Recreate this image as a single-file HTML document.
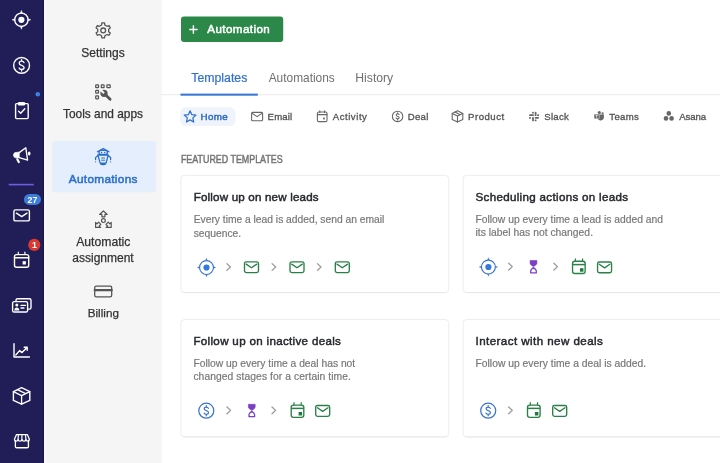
<!DOCTYPE html>
<html><head><meta charset="utf-8">
<style>
*{box-sizing:border-box;margin:0;padding:0}
html,body{width:720px;height:463px;overflow:hidden;background:#fff;font-family:"Liberation Sans",sans-serif}
svg{position:absolute;left:0;top:0;will-change:transform}
text{font-family:"Liberation Sans",sans-serif}
</style></head><body>
<svg width="720" height="463" viewBox="0 0 720 463">
<!-- backgrounds -->
<rect x="0" y="0" width="720" height="463" fill="#fff"/>
<rect x="0" y="0" width="44" height="463" fill="#211d57"/>
<rect x="43" y="0" width="1" height="463" fill="#1b1749"/>
<rect x="44" y="0" width="3" height="463" fill="#f7f8fd"/>
<rect x="47" y="0" width="114.8" height="463" fill="#f5f5f5"/>

<!-- NAV ICONS -->
<g fill="none" stroke="#fff" stroke-width="1.5" stroke-linecap="round" stroke-linejoin="round">
  <!-- crosshair -->
  <circle cx="21.4" cy="19.8" r="6.7" stroke-width="1.35"/>
  <path d="M20.5 13L21.4 10.4L22.3 13ZM20.5 26.6L21.4 29.2L22.3 26.6ZM14.6 18.9L12 19.8L14.6 20.7ZM28.2 18.9L30.8 19.8L28.2 20.7Z" fill="#fff" stroke-width=".5"/>
  <circle cx="21.4" cy="19.8" r="3.1" fill="#fff" stroke="none"/>
  <!-- dollar -->
  <circle cx="21.6" cy="65.4" r="7.9" stroke-width="1.4"/>
  <path d="M24 62.6C23.6 61.7 22.7 61.2 21.6 61.2C20.2 61.2 19.2 62 19.2 63.2C19.2 64.4 20.2 64.9 21.6 65.3C23 65.7 24.1 66.2 24.1 67.5C24.1 68.7 23 69.5 21.6 69.5C20.4 69.5 19.5 69 19.1 68M21.6 59.6V61.2M21.6 69.5V71.1" stroke-width="1.3"/>
  <!-- clipboard -->
  <rect x="15.6" y="103.6" width="12.6" height="15" rx="1" stroke-width="1.4"/>
  <path d="M18.8 102.6H24.6V105H18.8Z" fill="#fff" stroke-width="1"/>
  <path d="M18.6 111.2L20.7 113.3L24.8 108.8" stroke-width="1.4"/>
  <!-- megaphone -->
  <path d="M19.2 152.5V157.7H15.6C14.4 157.7 13.6 156.6 13.6 155.1C13.6 153.6 14.4 152.5 15.6 152.5Z" fill="#fff" stroke-width="0.8"/>
  <path d="M19.2 152.6L25.8 147.8L27.6 160.2L19.2 157.6" stroke-width="1.35"/>
  <ellipse cx="29.2" cy="153.6" rx="1.3" ry="2.1" fill="#fff" stroke="none"/>
  <path d="M17.3 159.2L18.8 162" stroke-width="2.2"/>
  <!-- divider -->
  <rect x="8.7" y="183.8" width="25.1" height="1.6" fill="#6e5ee0" stroke="none"/>
  <!-- mail -->
  <rect x="13.9" y="209.9" width="15.5" height="11" rx="1.5" stroke-width="1.4"/>
  <path d="M16.4 213.2L21.7 216.6L27 213.2" stroke-width="1.4"/>
  <!-- calendar -->
  <rect x="14.5" y="254.6" width="14.2" height="12.6" rx="2" stroke-width="1.4"/>
  <path d="M14.5 257.8H28.7" stroke-width="1.5"/>
  <path d="M18.3 252.2V254.4M24.9 252.2V254.4" stroke-width="1.2"/>
  <rect x="22.6" y="261.2" width="3.3" height="3.3" fill="#fff" stroke="none"/>
  <!-- contacts -->
  <path d="M16 300.8V300.3C16 299.4 16.7 298.7 17.6 298.7H29.4C30.3 298.7 31 299.4 31 300.3V307.5C31 308.4 30.3 309.1 29.4 309.1H28.4" stroke-width="1.4"/>
  <rect x="12.6" y="301.6" width="15" height="10.4" rx="1.6" stroke-width="1.4"/>
  <circle cx="16.8" cy="305" r="1.5" fill="#fff" stroke="none"/>
  <path d="M14.2 310.6C14.4 308.6 15.4 307.6 16.8 307.6S19.2 308.6 19.4 310.6Z" fill="#fff" stroke="none"/>
  <path d="M21 305.4H25.4M21 308H24" stroke-width="1.3"/>
  <!-- chart -->
  <path d="M14 343.8V357H29.4" stroke-width="1.4"/>
  <path d="M15.8 355L19.6 350.6L22 352.6L27 347.4M24.2 347.2H27.2V350.2" stroke-width="1.4"/>
  <!-- box -->
  <path d="M21.6 387.6L29.8 391.6V400.4L21.6 404.2L13.4 400.4V391.6Z" stroke-width="1.4"/>
  <path d="M13.4 391.6L21.6 395.6L29.8 391.6M21.6 395.6V404.2M17.4 389.6L25.7 393.6" stroke-width="1.3"/>
  <!-- shop -->
  <g transform="translate(21.9 441) scale(0.96) translate(-22.2 -441)">
  <path d="M15.4 440.4V446.6C15.4 447.4 16 448 16.8 448H27.6C28.4 448 29 447.4 29 446.6V440.4" stroke-width="1.4"/>
  <path d="M16.6 434.3H27.8L30 439.2C30 440.6 29.2 441.2 28.2 441.2C27.2 441.2 26.4 440.6 26.4 439.3C26.4 440.6 25.6 441.2 24.4 441.2C23.2 441.2 22.3 440.6 22.3 439.3C22.3 440.6 21.3 441.2 20.1 441.2C19 441.2 18.2 440.6 18.2 439.3C18.2 440.6 17.2 441.2 16.2 441.2C15.2 441.2 14.4 440.6 14.4 439.2Z" stroke-width="1.3"/>
  <path d="M18.5 434.3L18.2 439.3M22.2 434.3V439.3M25.9 434.3L26.4 439.3" stroke-width="1.2"/>
  </g>
</g>
<!-- nav badges -->
<circle cx="37.8" cy="94.2" r="2.3" fill="#3b82e6"/>
<rect x="23.9" y="193.9" width="17.1" height="11.1" rx="5.55" fill="#3b7ddd"/>
<text x="32.5" y="202.6" font-size="8.8" font-weight="700" fill="#fff" text-anchor="middle">27</text>
<circle cx="34.3" cy="244.9" r="6.1" fill="#d9392f"/>
<text x="34.4" y="248.1" font-size="8.8" font-weight="700" fill="#fff" text-anchor="middle">1</text>

<!-- PANEL -->
<g fill="#333" stroke="#333" stroke-width="0.25">
<text x="103" y="57" font-size="12" text-anchor="middle">Settings</text>
<text x="103" y="118.3" font-size="11.9" text-anchor="middle">Tools and apps</text>
<text x="103.3" y="245.5" font-size="12.2" text-anchor="middle">Automatic</text>
<text x="103" y="262" font-size="12" text-anchor="middle">assignment</text>
<text x="103.3" y="317.3" font-size="11.7" text-anchor="middle">Billing</text>
</g>
<rect x="52.1" y="141.1" width="104.1" height="51.1" rx="3" fill="#e4eefc"/>
<text x="68.8" y="182.9" font-size="11.8" fill="#2a6fcb" stroke="#2a6fcb" stroke-width="0.5" textLength="68.6" lengthAdjust="spacing">Automations</text>
<g fill="none" stroke="#555" stroke-width="1.3" stroke-linecap="round" stroke-linejoin="round">
  <!-- gear -->
  <path d="M101.56 25.04L101.88 22.92H104.52L104.84 25.04L107.02 26.30L109.02 25.51L110.34 27.80L108.66 29.14V31.66L110.34 33.00L109.02 35.29L107.02 34.50L104.84 35.76L104.52 37.88H101.88L101.56 35.76L99.38 34.50L97.38 35.29L96.06 33.00L97.74 31.66V29.14L96.06 27.80L97.38 25.51L99.38 26.30Z"/>
  <circle cx="103.2" cy="30.4" r="2.4"/>
  <!-- billing -->
  <rect x="94.7" y="286.2" width="17" height="10.6" rx="1.6"/>
  <path d="M94.7 290.2H111.7" stroke-width="2.2"/>
</g>
<!-- tools -->
<g fill="none" stroke="#555" stroke-width="1.25">
  <rect x="95.7" y="84.9" width="2.8" height="2.8" rx=".5"/>
  <rect x="101.3" y="84.9" width="2.8" height="2.8" rx=".5"/>
  <rect x="106.9" y="84.9" width="3.3" height="2.8" rx=".5"/>
  <rect x="95.7" y="90.4" width="2.8" height="2.8" rx=".5"/>
  <rect x="95.7" y="95.9" width="2.8" height="2.9" rx=".5"/>
</g>
<circle cx="104" cy="93.3" r="3.6" fill="#555"/>
<path d="M104.2 93.5L110.1 99.3" stroke="#555" stroke-width="2.8" stroke-linecap="round"/>
<path d="M104 93.3L100.8 90.1" stroke="#f5f5f5" stroke-width="2.1" stroke-linecap="butt"/>
<!-- robot -->
<g fill="none" stroke="#2a6fcb" stroke-width="1.3" stroke-linecap="round" stroke-linejoin="round">
  <path d="M97.4 151.8L103.2 148.6L109 151.8"/>
  <rect x="99" y="150.3" width="8.4" height="4.2" rx="2.1"/>
  <path d="M97.9 155H108.2L106.2 162.6C105.9 163.8 104.8 164.7 103.6 164.7H102.6C101.4 164.7 100.3 163.8 100 162.6Z"/>
  <path d="M97.9 155.4L95.6 157.6V159.6M108.2 155.4L110.6 157.6V159.6"/>
  <path d="M101.6 158H104.6M101.6 160.2H104.6" stroke-width="1"/>
</g>
<circle cx="101.6" cy="152.4" r=".75" fill="#2a6fcb"/><circle cx="104.7" cy="152.4" r=".75" fill="#2a6fcb"/>
<circle cx="95.6" cy="161.8" r=".6" fill="#2a6fcb"/><circle cx="110.6" cy="161.8" r=".6" fill="#2a6fcb"/>
<path d="M100.6 162.6H105.6L105.4 163.4C105 164.4 104.2 164.9 103.1 164.9S101.2 164.4 100.8 163.4Z" fill="#2a6fcb"/>
<!-- assignment -->
<g fill="none" stroke="#555" stroke-width="1.2" stroke-linejoin="round">
  <path d="M103.4 211L107.2 214.4H104.9V216.8H101.9V214.4H99.6Z"/>
  <circle cx="103.4" cy="220.6" r="1.9"/>
  <path d="M95.6 222.4V227.4H100.6L99.2 226L100.8 224.4L98.6 222.2L97 223.8Z"/>
  <path d="M111.2 222.4V227.4H106.2L107.6 226L106 224.4L108.2 222.2L109.8 223.8Z"/>
</g>

<!-- MAIN -->
<rect x="181" y="16.4" width="102.2" height="25.6" rx="3" fill="#2b8849"/>
<path d="M189.2 29.5H197.6M193.4 25.3V33.7" stroke="#fff" stroke-width="1.4"/>
<text x="207.3" y="32.9" font-size="11.6" fill="#fff" stroke="#fff" stroke-width="0.5" textLength="62.4" lengthAdjust="spacing">Automation</text>

<!-- tabs -->
<rect x="161" y="94.2" width="559" height="1" fill="#ebebeb"/>
<rect x="180.5" y="93.6" width="77.3" height="2.1" fill="#3a78d4"/>
<text x="191.3" y="81.7" font-size="12.3" fill="#2f6fcf" stroke="#2f6fcf" stroke-width="0.2">Templates</text>
<text x="268.7" y="81.7" font-size="11.9" fill="#707070">Automations</text>
<text x="355.3" y="81.7" font-size="12.2" fill="#707070">History</text>

<!-- chips -->
<rect x="180.2" y="107.2" width="55.3" height="18.8" rx="5.5" fill="#eff4fc"/>
<path d="M190.10 110.80 L191.80 114.65 L196.00 115.08 L192.86 117.90 L193.74 122.02 L190.10 119.90 L186.46 122.02 L187.34 117.90 L184.20 115.08 L188.40 114.65Z" fill="none" stroke="#2f6fcf" stroke-width="1.25" stroke-linejoin="round"/>
<text x="200.6" y="119.9" font-size="9.8" fill="#2c69c4" stroke="#2c69c4" stroke-width="0.45" textLength="27.2" lengthAdjust="spacing">Home</text>
<g font-size="9.6" fill="#555" stroke="#555" stroke-width="0.32" lengthAdjust="spacing">
<text x="267.6" y="120" textLength="24.6" lengthAdjust="spacing">Email</text>
<text x="332.7" y="120" textLength="34.2" lengthAdjust="spacing">Activity</text>
<text x="407.7" y="120" textLength="20.6" lengthAdjust="spacing">Deal</text>
<text x="468.1" y="120" textLength="36" lengthAdjust="spacing">Product</text>
<text x="544.3" y="120" textLength="24.5" lengthAdjust="spacing">Slack</text>
<text x="609.3" y="120" textLength="29.5" lengthAdjust="spacing">Teams</text>
<text x="679.3" y="120" textLength="26.8" lengthAdjust="spacing">Asana</text>
</g>
<g fill="none" stroke="#666" stroke-width="1.1" stroke-linecap="round" stroke-linejoin="round">
  <rect x="251.6" y="112.4" width="11" height="8.4" rx="1"/>
  <path d="M252.2 113.4L257.1 116.6L262 113.4"/>
  <rect x="317.4" y="112" width="9.6" height="9.6" rx="1.4"/>
  <path d="M317.4 114.6H327M319.8 110.8V112.6M324.6 110.8V112.6"/>
  <rect x="323" y="117.6" width="1.8" height="1.8" fill="#666" stroke="none"/>
  <circle cx="397.6" cy="116.4" r="5.2"/>
  <path d="M399.1 114.6C398.9 114.1 398.3 113.7 397.6 113.7C396.8 113.7 396.2 114.2 396.2 114.9C396.2 115.7 396.9 116 397.6 116.2C398.4 116.4 399.1 116.8 399.1 117.6C399.1 118.3 398.4 118.9 397.6 118.9C396.9 118.9 396.2 118.5 396 117.9M397.6 112.7V113.7M397.6 118.9V120"/>
  <path d="M457.5 110.8L462.8 113.4V119.4L457.5 122L452.2 119.4V113.4Z"/>
  <path d="M452.2 113.4L457.5 116L462.8 113.4M457.5 116V122M454.9 112.1L460.2 114.7"/>
</g>
<!-- slack -->
<g fill="#666">
  <rect x="529.1" y="114.3" width="4.8" height="1.8" rx=".9"/>
  <rect x="532.1" y="111.8" width="1.8" height="1.8" rx=".5"/>
  <rect x="534.7" y="111.8" width="1.8" height="4.3" rx=".9"/>
  <rect x="537.2" y="114.3" width="1.8" height="1.8" rx=".5"/>
  <rect x="534.7" y="116.9" width="4.3" height="1.8" rx=".9"/>
  <rect x="534.7" y="119.5" width="1.8" height="1.8" rx=".5"/>
  <rect x="532.1" y="116.9" width="1.8" height="4.4" rx=".9"/>
  <rect x="529.1" y="116.9" width="1.8" height="1.8" rx=".5"/>
</g>
<!-- teams -->
<g fill="#666">
  <circle cx="599.3" cy="112.6" r="1.6"/>
  <circle cx="602.6" cy="113.4" r="1.1"/>
  <path d="M597.4 114.4H603.9V117.6C603.9 119.2 602.6 120.4 601 120.4H600.2C598.6 120.4 597.4 119.2 597.4 117.6Z"/>
  <rect x="594" y="113.9" width="5.2" height="4.9" rx=".6" fill="#666" stroke="#fff" stroke-width=".5"/>
  <path d="M595.2 115.1H598M596.6 115.1V117.8" stroke="#fff" stroke-width=".7"/>
</g>
<g fill="#666">
  <circle cx="668.8" cy="113.4" r="2.3"/>
  <circle cx="666" cy="118.4" r="2.3"/>
  <circle cx="671.6" cy="118.4" r="2.3"/>
</g>

<text x="180.9" y="162.5" font-size="10.4" fill="#747474" stroke="#747474" stroke-width="0.45" textLength="101.8" lengthAdjust="spacingAndGlyphs">FEATURED TEMPLATES</text>

<!-- cards -->
<g fill="#fff" stroke="#ededed" stroke-width="1">
  <rect x="180.9" y="175.3" width="267.8" height="117.3" rx="3.5"/>
  <rect x="463.1" y="175.3" width="280" height="117.3" rx="3.5"/>
  <rect x="180.9" y="319.6" width="267.8" height="117.3" rx="3.5"/>
  <rect x="463.1" y="319.6" width="280" height="117.3" rx="3.5"/>
</g>
<g fill="#e6e6e6">
  <rect x="183.5" y="292.2" width="262.6" height="0.9"/>
  <rect x="465.7" y="292.2" width="260" height="0.9"/>
  <rect x="183.5" y="436.5" width="262.6" height="0.9"/>
  <rect x="465.7" y="436.5" width="260" height="0.9"/>
</g>
<g font-size="11.6" fill="#26282e" stroke="#26282e" stroke-width="0.46" letter-spacing="0.18">
<text x="193.7" y="201.3">Follow up on new leads</text>
<text x="475.5" y="201.2" textLength="152.8" lengthAdjust="spacing">Scheduling actions on leads</text>
<text x="193.4" y="345.1" textLength="147.7" lengthAdjust="spacing">Follow up on inactive deals</text>
<text x="475.5" y="344.5" textLength="127.5" lengthAdjust="spacing">Interact with new deals</text>
</g>
<g font-size="10.3" fill="#777" stroke="#777" stroke-width="0.18">
<text x="193.7" y="222.8" textLength="190.6" lengthAdjust="spacing">Every time a lead is added, send an email</text>
<text x="193.7" y="236.5">sequence.</text>
<text x="475.5" y="222.7" textLength="187.5" lengthAdjust="spacing">Follow up every time a lead is added and</text>
<text x="475.5" y="235.8" textLength="117.5" lengthAdjust="spacing">its label has not changed.</text>
<text x="193.4" y="367" textLength="161.8" lengthAdjust="spacing">Follow up every time a deal has not</text>
<text x="193.4" y="380.4" textLength="157.5" lengthAdjust="spacing">changed stages for a certain time.</text>
<text x="475.5" y="366.7" textLength="170.7" lengthAdjust="spacing">Follow up every time a deal is added.</text>
</g>


<!-- card 1 icons -->
<g transform="translate(206.5 267.5)">
    <circle cx="0" cy="0" r="6.95" fill="none" stroke="#3a73d0" stroke-width="1.15"/>
    <circle cx="0" cy="0" r="3.1" fill="#3479e0"/>
    <path d="M-.8 -7.2L0 -9.2L.8 -7.2ZM-.8 7.2L0 9.2L.8 7.2ZM-7.2 -.8L-9.2 0L-7.2 .8ZM7.2 -.8L9.2 0L7.2 .8Z" fill="#3a73d0" stroke="#3a73d0" stroke-width=".35" stroke-linejoin="round"/>
</g>
<g transform="translate(228.6 267)">
    <path d="M-1.8 -3.4L1.8 0L-1.8 3.4" fill="none" stroke="#9a9a9a" stroke-width="1.3" stroke-linecap="round" stroke-linejoin="round"/>
</g>
<g transform="translate(251.5 267.2)">
    <rect x="-7" y="-5.4" width="14" height="10.8" rx="1.8" fill="none" stroke="#2a8048" stroke-width="1.35"/>
    <path d="M-5.3 -3.1L0 0.5L5.3 -3.1" fill="none" stroke="#2a8048" stroke-width="1.35" stroke-linejoin="round" stroke-linecap="round"/>
</g>
<g transform="translate(273.9 267)">
    <path d="M-1.8 -3.4L1.8 0L-1.8 3.4" fill="none" stroke="#9a9a9a" stroke-width="1.3" stroke-linecap="round" stroke-linejoin="round"/>
</g>
<g transform="translate(297 267.2)">
    <rect x="-7" y="-5.4" width="14" height="10.8" rx="1.8" fill="none" stroke="#2a8048" stroke-width="1.35"/>
    <path d="M-5.3 -3.1L0 0.5L5.3 -3.1" fill="none" stroke="#2a8048" stroke-width="1.35" stroke-linejoin="round" stroke-linecap="round"/>
</g>
<g transform="translate(319.2 267)">
    <path d="M-1.8 -3.4L1.8 0L-1.8 3.4" fill="none" stroke="#9a9a9a" stroke-width="1.3" stroke-linecap="round" stroke-linejoin="round"/>
</g>
<g transform="translate(342.3 267.2)">
    <rect x="-7" y="-5.4" width="14" height="10.8" rx="1.8" fill="none" stroke="#2a8048" stroke-width="1.35"/>
    <path d="M-5.3 -3.1L0 0.5L5.3 -3.1" fill="none" stroke="#2a8048" stroke-width="1.35" stroke-linejoin="round" stroke-linecap="round"/>
</g>
<!-- card 2 -->
<g transform="translate(488.4 267)">
    <circle cx="0" cy="0" r="6.95" fill="none" stroke="#3a73d0" stroke-width="1.15"/>
    <circle cx="0" cy="0" r="3.1" fill="#3479e0"/>
    <path d="M-.8 -7.2L0 -9.2L.8 -7.2ZM-.8 7.2L0 9.2L.8 7.2ZM-7.2 -.8L-9.2 0L-7.2 .8ZM7.2 -.8L9.2 0L7.2 .8Z" fill="#3a73d0" stroke="#3a73d0" stroke-width=".35" stroke-linejoin="round"/>
</g>
<g transform="translate(510.5 266.6)">
    <path d="M-1.8 -3.4L1.8 0L-1.8 3.4" fill="none" stroke="#9a9a9a" stroke-width="1.3" stroke-linecap="round" stroke-linejoin="round"/>
</g>
<g transform="translate(533.5 266.8)">
    <path d="M-3.4 -6.3H3.4V-3.6C3.4 -2.2 1.2 -0.9 0 -0.2C-1.2 -0.9 -3.4 -2.2 -3.4 -3.6Z" fill="#7b3fc4" stroke="#7b3fc4" stroke-width=".6" stroke-linejoin="round"/>
    <path d="M0 0.8C1.4 1.6 2.8 2.8 2.8 4.2V6.1H-2.8V4.2C-2.8 2.8 -1.4 1.6 0 0.8Z" fill="none" stroke="#7b3fc4" stroke-width="1.3" stroke-linejoin="round"/>
</g>
<g transform="translate(555.7 266.6)">
    <path d="M-1.8 -3.4L1.8 0L-1.8 3.4" fill="none" stroke="#9a9a9a" stroke-width="1.3" stroke-linecap="round" stroke-linejoin="round"/>
</g>
<g transform="translate(578.85 266.8)">
    <rect x="-6.3" y="-5.5" width="12.6" height="12.2" rx="2.2" fill="none" stroke="#2a8048" stroke-width="1.35"/>
    <path d="M-6.3 -2.2H6.3" stroke="#2a8048" stroke-width="1.5"/>
    <path d="M-3.5 -7.9V-5.6M3.7 -7.9V-5.6" stroke="#2a8048" stroke-width="1.2" stroke-linecap="round"/>
    <rect x="1.1" y="1.4" width="3.5" height="3.5" fill="#1f7a42"/>
</g>
<g transform="translate(604.55 267.35)">
    <rect x="-7" y="-5.4" width="14" height="10.8" rx="1.8" fill="none" stroke="#2a8048" stroke-width="1.35"/>
    <path d="M-5.3 -3.1L0 0.5L5.3 -3.1" fill="none" stroke="#2a8048" stroke-width="1.35" stroke-linejoin="round" stroke-linecap="round"/>
</g>
<!-- card 3 -->
<g transform="translate(206.3 410.7)">
    <circle cx="0" cy="0" r="7.5" fill="none" stroke="#3b74cf" stroke-width="1.25"/>
    <path d="M2.1 -2.3C1.8 -3.1 1 -3.6 0 -3.6C-1.2 -3.6 -2.1 -2.9 -2.1 -1.9C-2.1 -0.8 -1.2 -0.4 0 -0.1C1.2 0.2 2.2 0.7 2.2 1.8C2.2 2.9 1.2 3.6 0 3.6C-1.1 3.6 -1.9 3.1 -2.2 2.3M0 -5V-3.6M0 3.6V5" fill="none" stroke="#3b74cf" stroke-width="1.2" stroke-linecap="round"/>
</g>
<g transform="translate(228.8 410.4)">
    <path d="M-1.8 -3.4L1.8 0L-1.8 3.4" fill="none" stroke="#9a9a9a" stroke-width="1.3" stroke-linecap="round" stroke-linejoin="round"/>
</g>
<g transform="translate(251.8 410.6)">
    <path d="M-3.4 -6.3H3.4V-3.6C3.4 -2.2 1.2 -0.9 0 -0.2C-1.2 -0.9 -3.4 -2.2 -3.4 -3.6Z" fill="#7b3fc4" stroke="#7b3fc4" stroke-width=".6" stroke-linejoin="round"/>
    <path d="M0 0.8C1.4 1.6 2.8 2.8 2.8 4.2V6.1H-2.8V4.2C-2.8 2.8 -1.4 1.6 0 0.8Z" fill="none" stroke="#7b3fc4" stroke-width="1.3" stroke-linejoin="round"/>
</g>
<g transform="translate(273.8 410.4)">
    <path d="M-1.8 -3.4L1.8 0L-1.8 3.4" fill="none" stroke="#9a9a9a" stroke-width="1.3" stroke-linecap="round" stroke-linejoin="round"/>
</g>
<g transform="translate(297.5 410.6)">
    <rect x="-6.3" y="-5.5" width="12.6" height="12.2" rx="2.2" fill="none" stroke="#2a8048" stroke-width="1.35"/>
    <path d="M-6.3 -2.2H6.3" stroke="#2a8048" stroke-width="1.5"/>
    <path d="M-3.5 -7.9V-5.6M3.7 -7.9V-5.6" stroke="#2a8048" stroke-width="1.2" stroke-linecap="round"/>
    <rect x="1.1" y="1.4" width="3.5" height="3.5" fill="#1f7a42"/>
</g>
<g transform="translate(322.7 410.9)">
    <rect x="-7" y="-5.4" width="14" height="10.8" rx="1.8" fill="none" stroke="#2a8048" stroke-width="1.35"/>
    <path d="M-5.3 -3.1L0 0.5L5.3 -3.1" fill="none" stroke="#2a8048" stroke-width="1.35" stroke-linejoin="round" stroke-linecap="round"/>
</g>
<!-- card 4 -->
<g transform="translate(488.2 410.7)">
    <circle cx="0" cy="0" r="7.5" fill="none" stroke="#3b74cf" stroke-width="1.25"/>
    <path d="M2.1 -2.3C1.8 -3.1 1 -3.6 0 -3.6C-1.2 -3.6 -2.1 -2.9 -2.1 -1.9C-2.1 -0.8 -1.2 -0.4 0 -0.1C1.2 0.2 2.2 0.7 2.2 1.8C2.2 2.9 1.2 3.6 0 3.6C-1.1 3.6 -1.9 3.1 -2.2 2.3M0 -5V-3.6M0 3.6V5" fill="none" stroke="#3b74cf" stroke-width="1.2" stroke-linecap="round"/>
</g>
<g transform="translate(510.5 410.4)">
    <path d="M-1.8 -3.4L1.8 0L-1.8 3.4" fill="none" stroke="#9a9a9a" stroke-width="1.3" stroke-linecap="round" stroke-linejoin="round"/>
</g>
<g transform="translate(533.8 410.6)">
    <rect x="-6.3" y="-5.5" width="12.6" height="12.2" rx="2.2" fill="none" stroke="#2a8048" stroke-width="1.35"/>
    <path d="M-6.3 -2.2H6.3" stroke="#2a8048" stroke-width="1.5"/>
    <path d="M-3.5 -7.9V-5.6M3.7 -7.9V-5.6" stroke="#2a8048" stroke-width="1.2" stroke-linecap="round"/>
    <rect x="1.1" y="1.4" width="3.5" height="3.5" fill="#1f7a42"/>
</g>
<g transform="translate(559.7 410.9)">
    <rect x="-7" y="-5.4" width="14" height="10.8" rx="1.8" fill="none" stroke="#2a8048" stroke-width="1.35"/>
    <path d="M-5.3 -3.1L0 0.5L5.3 -3.1" fill="none" stroke="#2a8048" stroke-width="1.35" stroke-linejoin="round" stroke-linecap="round"/>
</g>
</svg>
</body></html>
